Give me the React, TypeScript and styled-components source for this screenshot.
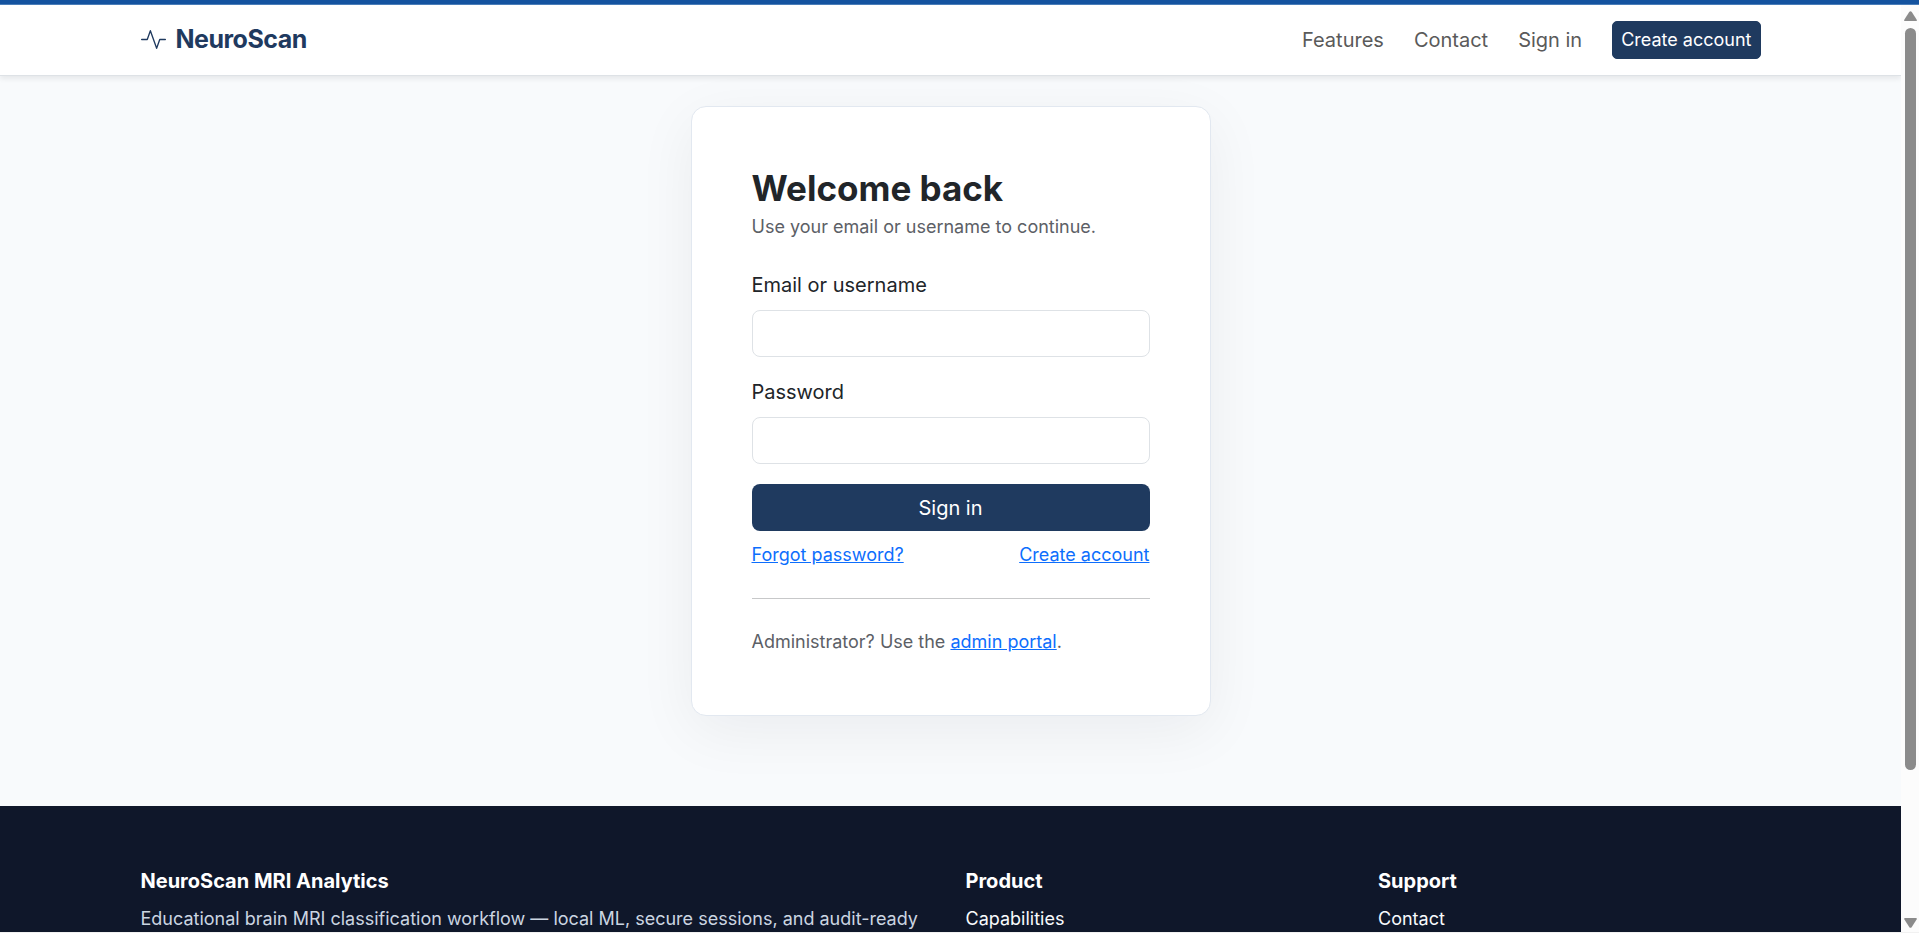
import React from "react";
import styled, { createGlobalStyle } from "styled-components";

const color = {
  navy: "#1f3a5f",
  ink: "#212529",
  muted: "#5c6066",
  link: "#0d6efd",
  line: "#e2e8f0",
  field: "#dee2e6",
  page: "#f8fafc",
  footer: "#0f172a",
  thumb: "#8b8b8b",
};

const GlobalStyle = createGlobalStyle`
  *, *::before, *::after { box-sizing: border-box; }
  body {
    margin: 0;
    font-family: Inter, "Liberation Sans", sans-serif;
    font-size: 20px;
    line-height: 30px;
    color: ${color.ink};
    background: ${color.page};
  }
  h1, h2, p, ul { margin: 0; padding: 0; }
  ul { list-style: none; }
  button, input { font: inherit; }
`;

const Shell = styled.div`
  display: flex;
  flex-direction: column;
  height: 100vh;
  border-bottom: 1px solid #f1f1f1;
`;

const TopStripe = styled.div`
  flex: none;
  height: 5px;
  background: #14539f;
  border-bottom: 1px solid #4a7db8;
`;

const Viewport = styled.div`
  display: flex;
  flex: 1;
  min-height: 0;
`;

const Page = styled.div`
  flex: 1;
  min-width: 0;
  overflow-y: auto;
  scrollbar-width: none;
`;

const Container = styled.div`
  width: 100%;
  max-width: 1650px;
  margin: 0 auto;
  padding: 0 15px;
`;

const Header = styled.header`
  position: relative;
  background: #fff;
  border-bottom: 1px solid #dee2e6;
  box-shadow: 0 3px 5px rgba(0, 0, 0, 0.07);
`;

const HeaderRow = styled(Container)`
  display: flex;
  align-items: center;
  justify-content: space-between;
  height: 70px;
`;

const Brand = styled.a`
  display: flex;
  align-items: center;
  gap: 10px;
  font-size: 25px;
  font-weight: 700;
  letter-spacing: -0.02em;
  color: ${color.navy};
  text-decoration: none;
  padding-bottom: 2px;
`;

const Nav = styled.nav`
  display: flex;
  align-items: center;
  gap: 30px;
`;

const NavLink = styled.a`
  color: #5a5a5a;
  text-decoration: none;
`;

const NavButton = styled.button`
  height: 38px;
  padding: 0 8px;
  border: 1px solid ${color.navy};
  border-radius: 5px;
  background: ${color.navy};
  color: #fff;
  font-size: 18px;
  line-height: 26px;
`;

const Main = styled.main`
  padding: 30px 15px 90px;
`;

const Card = styled.section`
  width: 100%;
  max-width: 520px;
  margin: 0 auto;
  padding: 60px;
  background: #fff;
  border: 1px solid ${color.line};
  border-radius: 15px;
  box-shadow: 0 15px 60px rgba(15, 23, 42, 0.06);
`;

const Title = styled.h1`
  margin-bottom: 5px;
  font-size: 35px;
  font-weight: 700;
  line-height: 42px;
`;

const SmallText = styled.p`
  font-size: 18px;
  line-height: 26px;
  color: ${color.muted};
`;

const Form = styled.form`
  padding-top: 30px;
`;

const Field = styled.div`
  display: flex;
  flex-direction: column;
  gap: 10px;
  margin-bottom: 20px;
`;

const Input = styled.input`
  width: 100%;
  height: 47px;
  padding: 0 15px;
  border: 1px solid ${color.field};
  border-radius: 8px;
  background: #fff;
  color: ${color.ink};
`;

const SubmitButton = styled.button`
  width: 100%;
  height: 47px;
  border: 0;
  border-radius: 8px;
  background: ${color.navy};
  color: #fff;
`;

const LinkRow = styled.div`
  display: flex;
  justify-content: space-between;
  margin-top: 10px;
  font-size: 18px;
  line-height: 27px;
`;

const TextLink = styled.a`
  color: ${color.link};
  text-decoration: underline;
`;

const Divider = styled.hr`
  margin: 30px 0;
  border: 0;
  border-top: 1px solid #c7c8c9;
`;

const Footer = styled.footer`
  padding: 60px 0;
  background: ${color.footer};
`;

const FooterGrid = styled.div`
  display: grid;
  grid-template-columns: 2fr 1fr 1fr;
  max-width: 1650px;
  margin: 0 auto;
`;

const FooterColumn = styled.div`
  padding: 0 15px;
  font-size: 18px;
  line-height: 26px;
  color: #cbd5e1;
`;

const FooterTitle = styled.h2`
  margin-bottom: 10px;
  font-size: 20px;
  font-weight: 700;
  line-height: 30px;
  color: #fff;
`;

const FooterLink = styled.a`
  color: #f8fafc;
  text-decoration: none;
`;

const ScrollTrack = styled.div`
  display: flex;
  flex: none;
  flex-direction: column;
  align-items: center;
  width: 18px;
  padding: 6px 0 4px;
  gap: 7px;
  background: #fcfcfc;
`;

const ScrollSpace = styled.div`
  display: flex;
  flex: 1;
  width: 11px;
`;

const ScrollThumb = styled.div`
  width: 11px;
  height: 84%;
  border-radius: 6px;
  background: ${color.thumb};
`;

const PulseIcon = () => (
  <svg width="25" height="25" viewBox="0 0 16 16" aria-hidden="true">
    <path
      d="M.4 8H4L6 2.4 10 13.6 12 8H15.6"
      fill="none"
      stroke="currentColor"
      strokeWidth="0.85"
      strokeLinecap="round"
      strokeLinejoin="round"
    />
  </svg>
);

const Arrow = ({ down = false }: { down?: boolean }) => (
  <svg width="13" height="10" viewBox="0 0 12 10" preserveAspectRatio="none" aria-hidden="true">
    <path
      d={
        down
          ? "M1 0H11Q12.4 0 11.6 1.4L7.2 8.9Q6 10.6 4.8 8.9L.4 1.4Q-.4 0 1 0Z"
          : "M1 10H11Q12.4 10 11.6 8.6L7.2 1.1Q6-.6 4.8 1.1L.4 8.6Q-.4 10 1 10Z"
      }
      fill={color.thumb}
    />
  </svg>
);

export default function App() {
  return (
    <Shell>
      <GlobalStyle />
      <TopStripe />
      <Viewport>
        <Page>
          <Header>
            <HeaderRow>
              <Brand href="#">
                <PulseIcon />
                NeuroScan
              </Brand>
              <Nav>
                <NavLink href="#features">Features</NavLink>
                <NavLink href="#contact">Contact</NavLink>
                <NavLink href="#sign-in">Sign in</NavLink>
                <NavButton type="button">Create account</NavButton>
              </Nav>
            </HeaderRow>
          </Header>

          <Main>
            <Card>
              <Title>Welcome back</Title>
              <SmallText>Use your email or username to continue.</SmallText>
              <Form onSubmit={(event) => event.preventDefault()}>
                <Field>
                  <label htmlFor="identity">Email or username</label>
                  <Input id="identity" type="text" autoComplete="username" />
                </Field>
                <Field>
                  <label htmlFor="password">Password</label>
                  <Input id="password" type="password" autoComplete="current-password" />
                </Field>
                <SubmitButton type="submit">Sign in</SubmitButton>
              </Form>
              <LinkRow>
                <TextLink href="#forgot">Forgot password?</TextLink>
                <TextLink href="#register">Create account</TextLink>
              </LinkRow>
              <Divider />
              <SmallText>
                Administrator? Use the <TextLink href="#admin">admin portal</TextLink>.
              </SmallText>
            </Card>
          </Main>

          <Footer>
            <FooterGrid>
              <FooterColumn>
                <FooterTitle>NeuroScan MRI Analytics</FooterTitle>
                <p>Educational brain MRI classification workflow — local ML, secure sessions, and audit-ready</p>
              </FooterColumn>
              <FooterColumn>
                <FooterTitle>Product</FooterTitle>
                <ul>
                  <li><FooterLink href="#capabilities">Capabilities</FooterLink></li>
                </ul>
              </FooterColumn>
              <FooterColumn>
                <FooterTitle>Support</FooterTitle>
                <ul>
                  <li><FooterLink href="#contact">Contact</FooterLink></li>
                </ul>
              </FooterColumn>
            </FooterGrid>
          </Footer>
        </Page>
        <ScrollTrack>
          <Arrow />
          <ScrollSpace>
            <ScrollThumb />
          </ScrollSpace>
          <Arrow down />
        </ScrollTrack>
      </Viewport>
    </Shell>
  );
}
